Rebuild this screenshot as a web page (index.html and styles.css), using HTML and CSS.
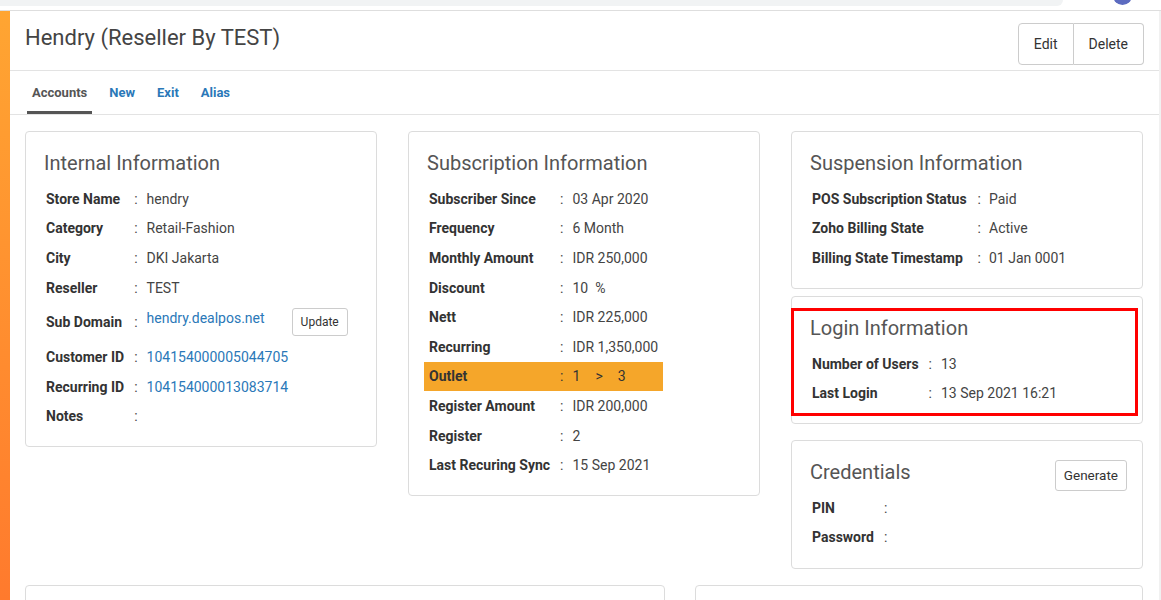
FILE: index.html
```html
<!DOCTYPE html>
<html lang="en">
<head>
  <meta charset="UTF-8">
  <title>Hendry (Reseller By TEST)</title>
  <link rel="stylesheet" href="styles.css">
</head>
<body>
  <div class="topbar">
    <div class="search"></div>
    <div class="avatar"></div>
  </div>

  <div class="page">
    <div class="stripe"></div>

    <div class="main">
      <div class="header">
        <h1 class="title">Hendry (Reseller By TEST)</h1>
        <div class="btn-group">
          <button class="btn">Edit</button>
          <button class="btn">Delete</button>
        </div>
      </div>

      <div class="tabs">
        <a class="tab active">Accounts</a>
        <a class="tab">New</a>
        <a class="tab">Exit</a>
        <a class="tab">Alias</a>
      </div>

      <div class="content">
        <div class="grid">
          <div class="col">
            <div class="card">
              <h3>Internal Information</h3>
              <table class="info">
                <tr><td class="lbl">Store Name</td><td class="sep">:</td><td>hendry</td></tr>
                <tr><td class="lbl">Category</td><td class="sep">:</td><td>Retail-Fashion</td></tr>
                <tr><td class="lbl">City</td><td class="sep">:</td><td>DKI Jakarta</td></tr>
                <tr><td class="lbl">Reseller</td><td class="sep">:</td><td>TEST</td></tr>
                <tr class="tall">
                  <td class="lbl">Sub Domain</td><td class="sep">:</td>
                  <td><div class="domain"><a class="link">hendry.dealpos.net</a><button class="btn-sm">Update</button></div></td>
                </tr>
                <tr><td class="lbl">Customer ID</td><td class="sep">:</td><td><a class="link">104154000005044705</a></td></tr>
                <tr><td class="lbl">Recurring ID</td><td class="sep">:</td><td><a class="link">104154000013083714</a></td></tr>
                <tr><td class="lbl">Notes</td><td class="sep">:</td><td></td></tr>
              </table>
            </div>
          </div>

          <div class="col">
            <div class="card">
              <h3>Subscription Information</h3>
              <table class="info">
                <tr><td class="lbl">Subscriber Since</td><td class="sep">:</td><td>03 Apr 2020</td></tr>
                <tr><td class="lbl">Frequency</td><td class="sep">:</td><td>6 Month</td></tr>
                <tr><td class="lbl">Monthly Amount</td><td class="sep">:</td><td>IDR 250,000</td></tr>
                <tr><td class="lbl">Discount</td><td class="sep">:</td><td>10&nbsp; %</td></tr>
                <tr><td class="lbl">Nett</td><td class="sep">:</td><td>IDR 225,000</td></tr>
                <tr><td class="lbl">Recurring</td><td class="sep">:</td><td>IDR 1,350,000</td></tr>
                <tr class="highlight"><td class="lbl">Outlet</td><td class="sep">:</td><td>1<span class="arrow">&gt;</span>3</td></tr>
                <tr><td class="lbl">Register Amount</td><td class="sep">:</td><td>IDR 200,000</td></tr>
                <tr><td class="lbl">Register</td><td class="sep">:</td><td>2</td></tr>
                <tr><td class="lbl">Last Recuring Sync</td><td class="sep">:</td><td>15 Sep 2021</td></tr>
              </table>
            </div>
          </div>

          <div class="col">
            <div class="card">
              <h3>Suspension Information</h3>
              <table class="info">
                <tr><td class="lbl">POS Subscription Status</td><td class="sep wide">:</td><td>Paid</td></tr>
                <tr><td class="lbl">Zoho Billing State</td><td class="sep wide">:</td><td>Active</td></tr>
                <tr><td class="lbl">Billing State Timestamp</td><td class="sep wide">:</td><td>01 Jan 0001</td></tr>
              </table>
            </div>

            <div class="card card-login">
              <div class="marker"></div>
              <h3>Login Information</h3>
              <table class="info">
                <tr><td class="lbl">Number of Users</td><td class="sep">:</td><td>13</td></tr>
                <tr><td class="lbl">Last Login</td><td class="sep">:</td><td>13 Sep 2021 16:21</td></tr>
              </table>
            </div>

            <div class="card card-cred">
              <button class="btn-sm btn-generate">Generate</button>
              <h3>Credentials</h3>
              <table class="info">
                <tr><td class="lbl">PIN</td><td class="sep">:</td><td></td></tr>
                <tr><td class="lbl">Password</td><td class="sep">:</td><td></td></tr>
              </table>
            </div>
          </div>
        </div>

        <div class="grid-bottom">
          <div class="card card-empty"></div>
          <div class="card card-empty"></div>
        </div>
      </div>
    </div>
    <div class="scroll"></div>
  </div>
</body>
</html>
```

FILE: styles.css
```css
html, body {
  margin: 0;
  height: 100%;
  overflow: hidden;
}

body {
  font-family: Roboto, "Liberation Sans", sans-serif;
  color: #333;
  background-color: #fff;
}

.topbar {
  position: relative;
  height: 10px;
  border-bottom: 1px solid #dedede;
}

.search {
  width: 1063px;
  height: 6px;
  background-color: #f1f3f4;
  border-bottom-right-radius: 8px;
}

.avatar {
  position: absolute;
  left: 1113px;
  top: -14px;
  width: 19px;
  height: 19px;
  border-radius: 50%;
  background-color: #5c6bc0;
}

.page {
  display: flex;
  height: 589px;
}

.stripe {
  width: 10px;
  flex-shrink: 0;
  background: linear-gradient(#ffa532, #ff7a2d);
}

.scroll {
  width: 2px;
  flex-shrink: 0;
  background-color: #f1f1f1;
}

.main {
  flex: 1;
  min-width: 0;
}

.header {
  height: 59px;
  display: flex;
  justify-content: space-between;
  align-items: flex-start;
  padding: 0 15px;
  border-bottom: 1px solid #e3e3e3;
}

.title {
  margin: 0;
  padding-top: 15px;
  font-size: 22px;
  line-height: 24px;
  font-weight: 400;
  color: #444;
}

.btn-group {
  display: flex;
  margin-top: 12px;
}

.btn {
  height: 42px;
  padding: 0 15px;
  font-family: inherit;
  font-size: 14px;
  color: #333;
  background-color: #fff;
  border: 1px solid #ccc;
  cursor: pointer;
}

.btn:first-child {
  border-radius: 4px 0 0 4px;
}

.btn:last-child {
  border-left: none;
  border-radius: 0 4px 4px 0;
}

.tabs {
  display: flex;
  padding-left: 17px;
  border-bottom: 1px solid #e3e3e3;
}

.tab {
  padding: 12px 5px 8px;
  margin-right: 12px;
  font-size: 13px;
  line-height: 20px;
  font-weight: bold;
  color: #2a78b8;
  border-bottom: 3px solid transparent;
  cursor: pointer;
}

.tab.active {
  color: #555;
  border-bottom-color: #555;
}

.content {
  padding: 16px 16px 0 15px;
}

.grid {
  display: grid;
  grid-template-columns: 1fr 1fr 1fr;
  column-gap: 31px;
  align-items: start;
}

.grid-bottom {
  display: grid;
  grid-template-columns: 640px 1fr;
  column-gap: 30px;
  margin-top: 16px;
}

.card {
  position: relative;
  border: 1px solid #dcdcdc;
  border-radius: 4px;
  padding: 19px 15px 15px;
}

.card h3 {
  margin: 0 3px 9px;
  font-size: 20px;
  line-height: 24px;
  font-weight: 400;
  color: #555;
}

.card-login {
  margin-top: 7px;
}

.card-cred {
  margin-top: 16px;
  padding-bottom: 16px;
}

.card-empty {
  height: 60px;
}

.info {
  border-collapse: collapse;
  font-size: 14px;
}

.info td {
  height: 29.6px;
  padding: 0 5px;
  line-height: 20px;
  vertical-align: middle;
  color: #444;
}

.info td.lbl {
  font-weight: bold;
  color: #333;
  white-space: nowrap;
}

.info td.sep {
  padding: 0 4px 0 5px;
}

.info td.sep.wide {
  padding: 0 3px 0 6px;
}

.info tr.tall td {
  height: 40px;
}

.info tr.highlight td {
  background-color: #f5a62a;
  color: #333;
}

.arrow {
  margin: 0 15px;
}

.link {
  color: #2a78b8;
  cursor: pointer;
}

.domain {
  display: flex;
  align-items: flex-start;
  gap: 27px;
}

.btn-sm {
  height: 28px;
  padding: 0 8px;
  font-family: inherit;
  font-size: 12px;
  color: #333;
  background-color: #fff;
  border: 1px solid #ccc;
  border-radius: 3px;
  cursor: pointer;
}

.btn-generate {
  float: right;
  height: 31px;
  padding: 0 8px;
  font-size: 13.5px;
  margin-top: 0;
}

.marker {
  position: absolute;
  left: -1px;
  top: 11px;
  width: 341px;
  height: 102px;
  border: 3px solid #f00;
  pointer-events: none;
}
```
